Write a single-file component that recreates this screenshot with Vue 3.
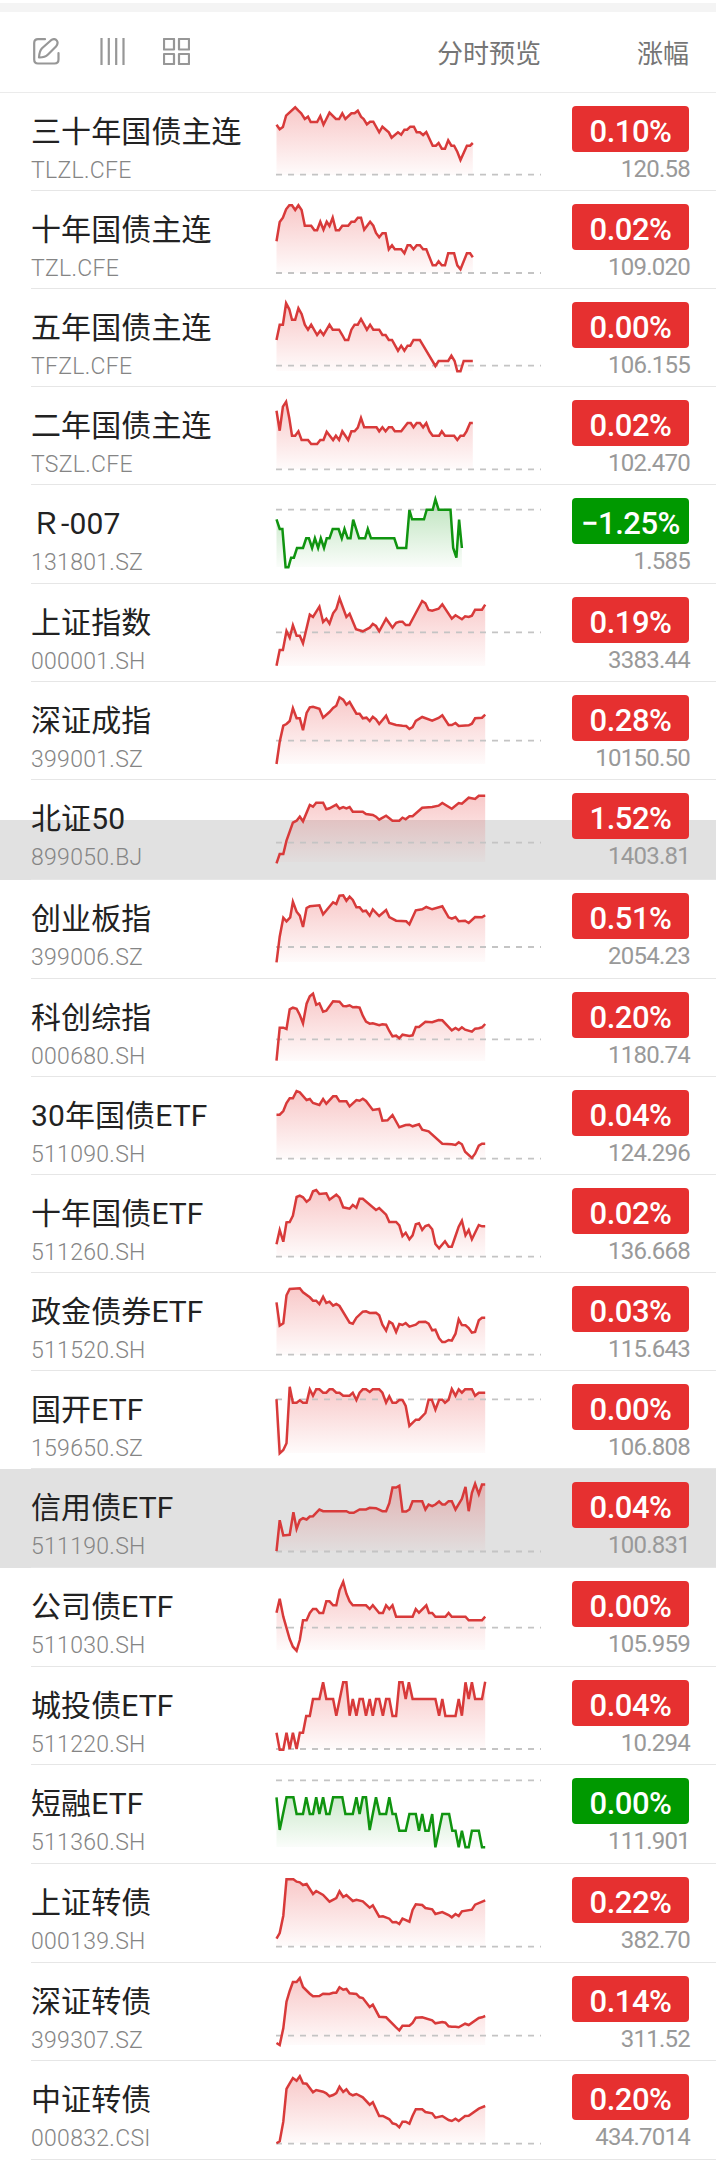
<template>
	<div class="quotes">
		<div class="strip"></div>
		<header class="toolbar">
			<div class="tools">
				<svg width="27" height="27" viewBox="0 0 27 27">
					<path d="M12 1.200H5Q1.200 1.200 1.200 5V21.500Q1.200 25.500 5 25.500H21.500Q25.500 25.500 25.500 21.500V15" />
					<path d="M6 19.500C6.200 16 6.600 12.800 9 10.300L17.500 2.700C20 .7 22.500 1 23.800 2.600C25 4.200 24.600 6.500 23 8.500L15 16.500C12.500 19 9.500 19.600 6 19.500Z" />
				</svg>
				<svg class="bars" width="25" height="27" viewBox="0 0 25 27">
					<path d="M1.500 0V27M8.800 0V27M16.200 0V27M23.500 0V27" />
				</svg>
				<svg width="27" height="27" viewBox="0 0 27 27">
					<path d="M1 1H11V11.500H1ZM16 1H26V11.500H16ZM1 16H11V26H1ZM16 16H26V26H16Z" />
				</svg>
			</div>
			<span class="col-preview">分时预览</span>
			<span class="col-change">涨幅</span>
		</header>

		<!-- Lista de cotizaciones -->
		<div v-for="q in quotes" :key="q.code" class="row" :class="[q.tone, q.mark]" :style="{ height: q.h + 'px' }">
			<div class="cell">
				<div class="ident">
					<div class="name">{{ q.name }}</div>
					<div class="code">{{ q.code }}</div>
				</div>
				<svg class="trend" width="265" height="97">
					<path class="area" :d="q.area" :fill="q.tone === 'down' ? 'url(#fall)' : 'url(#rise)'" />
					<path class="base" :d="'M0 ' + q.base + 'H265'" />
					<path class="line" :d="q.line" />
				</svg>
				<div class="figures">
					<div class="badge">{{ q.pct }}</div>
					<div class="price">{{ q.price }}</div>
				</div>
			</div>
		</div>

		<svg class="defs" width="0" height="0">
			<defs>
				<linearGradient id="rise" gradientUnits="userSpaceOnUse" x1="0" y1="14" x2="0" y2="82">
					<stop offset="0" stop-color="#e63232" stop-opacity=".27" />
					<stop offset="1" stop-color="#e63232" stop-opacity=".02" />
				</linearGradient>
				<linearGradient id="fall" gradientUnits="userSpaceOnUse" x1="0" y1="14" x2="0" y2="82">
					<stop offset="0" stop-color="#089808" stop-opacity=".27" />
					<stop offset="1" stop-color="#089808" stop-opacity=".02" />
				</linearGradient>
			</defs>
		</svg>
	</div>
</template>

<script setup>
	// name, code, pct, price, height, y shift, base, points
	const rows = [
		['三十年国债主连', 'TLZL.CFE', '0.10%', '120.58', 98, -93, 524, '604,374 611,388 618,381 625,347 645,322 652,332 658,340 666,357 673,350 679,366 693,366 700,348 707,374 720,338 734,357 741,357 748,340 755,357 768,340 775,340 782,332 789,350 795,357 802,373 809,365 816,365 829,397 836,380 850,397 856,413 870,397 877,404 884,389 890,389 897,380 905,380 911,397 918,397 925,405 932,396 946,437 953,437 959,429 966,446 973,446 980,421 987,437 993,437 1000,455 1007,480 1021,437 1028,437 1034,429'],
		['十年国债主连', 'TZL.CFE', '0.02%', '109.020', 98, -1, 249, '604,154 611,96 618,83 625,58 632,46 638,46 645,60 652,46 659,60 666,107 680,107 687,121 693,121 700,95 707,119 714,95 720,108 727,83 734,121 741,121 748,107 761,107 768,95 775,95 782,83 789,83 796,119 809,95 816,107 822,129 829,142 836,130 843,130 850,178 857,166 863,178 877,178 884,190 891,166 897,166 904,178 911,166 918,166 925,178 932,178 946,226 953,226 959,214 966,226 973,226 980,190 993,190 1000,226 1007,238 1021,190 1028,190 1034,202'],
		['五年国债主连', 'TFZL.CFE', '0.00%', '106.155', 98, -99, 527, '604,450 611,404 618,404 625,340 632,358 638,389 645,389 652,355 659,372 666,404 673,419 680,404 693,435 700,422 707,435 720,404 727,419 741,419 748,435 754,450 761,450 768,419 775,404 782,404 789,387 802,419 809,404 816,419 829,419 836,435 843,435 850,450 857,450 870,482 877,467 884,482 891,467 897,467 904,450 918,450 925,466 952,528 959,513 980,513 987,497 994,513 1000,544 1007,544 1014,513 1034,513'],
		['二年国债主连', 'TSZL.CFE', '0.02%', '102.470', 98, 3, 238, '604,62 611,122 618,50 625,35 632,85 638,137 645,137 652,124 659,150 673,150 680,162 693,162 700,150 707,150 714,125 728,150 734,137 741,150 748,124 761,150 768,124 775,124 782,113 789,84 796,112 823,112 829,124 836,112 843,124 850,112 857,112 863,124 877,124 891,99 898,99 904,112 911,99 918,99 925,112 932,99 939,124 946,137 960,137 966,124 973,137 993,137 1000,150 1007,137 1014,137 1020,124 1028,99 1034,99'],
		['Ｒ-007', '131801.SZ', '−1.25%', '1.585', 99, -95, 359, '604,388 611,417 617,417 624,532 630,532 636,503 642,503 649,474 662,474 669,445 675,445 682,474 688,445 695,474 701,445 708,474 714,445 720,445 727,417 740,417 747,445 753,417 760,445 766,445 772,389 785,445 798,445 804,417 811,445 862,445 869,474 888,474 895,360 901,388 927,388 933,359 946,359 952,328 959,359 985,359 991,474 998,503 1004,389 1010,474', 'down'],
		['上证指数', '000001.SH', '0.19%', '3383.44', 98, 1, 142, '604,242 611,195 618,195 626,138 633,158 640,121 648,152 655,152 662,175 677,89 684,96 698,65 706,111 713,101 720,116 728,85 735,72 742,40 757,96 764,86 778,133 793,139 808,128 815,117 822,123 829,139 844,101 858,128 866,113 873,110 880,110 887,120 895,120 923,48 930,55 937,75 945,77 959,71 967,58 988,101 996,91 1010,103 1017,94 1025,96 1032,92 1039,74 1054,74 1061,59'],
		['深证成指', '399001.SZ', '0.28%', '10150.50', 98, -97, 467, '604,537 611,470 619,422 626,417 633,408 640,370 648,400 655,400 662,436 670,384 677,367 684,365 698,371 706,398 720,381 728,369 735,362 742,337 750,344 757,359 764,351 779,386 786,386 793,400 801,398 808,408 815,395 822,403 829,417 844,392 851,414 866,420 880,422 888,423 895,432 902,426 909,408 923,396 945,407 959,399 967,391 981,420 988,420 996,414 1003,423 1025,421 1032,416 1039,400 1054,398 1061,389'],
		['北证50', '899050.BJ', '1.52%', '1403.81', 100, 0, 188, '604,250 611,222 619,222 626,182 640,128 648,122 655,110 662,124 677,75 684,80 691,68 706,68 713,88 720,85 735,74 742,86 750,81 757,85 764,81 771,95 793,95 800,102 815,105 822,110 829,119 844,107 858,122 873,122 880,113 887,118 895,109 902,109 923,83 945,81 959,77 967,69 988,86 1003,69 1010,71 1025,53 1039,57 1047,47 1061,47', 'up', 'half'],
		['创业板指', '399006.SZ', '0.51%', '2054.23', 99, -100, 501, '604,547 611,470 619,413 626,424 634,412 640,365 648,395 655,407 662,441 670,384 677,379 698,376 706,403 728,367 735,372 742,347 750,346 757,362 764,350 771,360 779,382 786,382 793,394 800,392 808,407 815,388 829,408 844,390 851,411 866,422 888,424 895,433 909,391 923,388 932,381 945,388 967,379 981,412 988,416 996,411 1003,424 1017,422 1025,429 1039,411 1054,412 1061,406'],
		['科创综指', '000680.SH', '0.20%', '1180.74', 98, -4, 193, '604,257 611,158 619,158 626,162 633,103 640,98 648,101 655,120 662,145 670,86 677,64 684,56 691,89 698,85 706,110 713,107 728,79 742,80 750,93 757,94 764,91 771,97 779,96 786,98 793,122 800,140 808,146 815,145 829,151 836,148 844,149 851,168 858,184 866,182 873,190 880,179 895,183 902,181 909,156 916,156 930,140 945,142 959,135 967,136 988,166 996,159 1003,165 1010,157 1017,164 1032,170 1039,161 1047,160 1054,157 1061,147'],
		['30年国债ETF', '511090.SH', '0.04%', '124.296', 98, -102, 551, '604,419 611,419 619,408 626,384 633,370 640,370 648,348 655,352 670,375 677,372 684,384 698,390 706,372 713,386 728,364 735,364 742,379 757,379 764,394 779,375 786,377 793,371 800,378 815,405 829,402 836,437 847,436 858,420 873,457 887,450 895,449 902,454 916,448 923,464 937,469 967,506 988,508 996,510 1003,502 1010,508 1017,530 1032,549 1039,536 1047,512 1054,506 1061,506'],
		['十年国债ETF', '511260.SH', '0.02%', '136.668', 98, -5, 260, '604,223 611,180 619,215 626,157 633,156 640,137 648,81 655,77 662,82 670,95 677,88 684,64 691,60 698,72 713,70 720,89 735,74 742,83 750,112 764,116 771,105 779,113 786,86 793,86 822,120 829,114 844,134 851,156 866,156 873,166 880,198 887,188 895,208 902,196 909,163 916,160 923,180 930,168 937,165 945,178 952,222 960,235 973,214 981,230 988,230 996,198 1003,170 1010,152 1018,196 1025,180 1032,208 1047,165 1054,169 1061,169'],
		['政金债券ETF', '511520.SH', '0.03%', '115.643', 98, -103, 554, '604,397 611,467 619,460 626,376 633,357 655,355 662,367 677,382 684,392 691,392 698,402 706,380 713,399 720,395 728,407 735,402 742,408 764,458 771,461 779,443 793,425 800,424 808,429 822,428 829,436 836,464 844,482 851,455 858,461 866,486 873,462 880,465 887,459 895,470 909,464 916,456 930,455 937,461 945,481 952,479 960,505 967,516 973,516 981,510 988,512 996,491 1003,448 1010,465 1018,466 1025,474 1032,488 1039,486 1047,451 1054,443 1061,443'],
		['国开ETF', '159650.SZ', '0.00%', '106.808', 98, -1, 88, '604,88 611,250 619,240 626,220 633,50 640,98 648,98 655,91 662,98 670,98 677,58 684,77 691,58 698,58 706,68 713,68 720,58 727,58 735,68 742,68 750,77 764,77 771,68 779,90 786,68 793,58 800,58 808,66 815,58 829,58 836,68 844,98 851,79 858,98 866,98 873,90 880,90 887,108 895,168 909,149 916,149 930,129 937,89 944,89 952,119 960,89 967,89 973,98 981,89 988,57 996,77 1003,58 1010,68 1017,58 1032,58 1039,77 1047,68 1061,68'],
		['信用债ETF', '511190.SH', '0.04%', '100.831', 99, -99.5, 546, '604,545 611,452 619,498 633,496 641,428 648,478 655,452 662,446 670,450 677,441 684,440 698,420 706,425 757,425 764,430 773,430 786,420 800,420 808,415 822,416 836,425 844,425 851,401 858,354 866,354 873,349 880,426 888,426 895,420 902,395 923,395 930,420 937,405 945,410 952,405 960,396 967,405 973,405 981,395 988,395 996,420 1010,388 1018,352 1025,425 1032,370 1039,343 1047,374 1054,345 1061,345', 'up', 'full'],
		['公司债ETF', '511030.SH', '0.00%', '105.959', 99, -3, 188, '604,143 611,101 619,155 633,222 640,245 648,257 655,225 662,166 670,166 677,144 684,132 691,132 698,144 706,144 713,109 720,109 728,121 735,121 742,76 750,50 757,86 764,109 771,121 800,121 808,132 815,121 829,144 837,144 844,121 851,132 858,121 866,155 902,155 909,132 916,143 932,121 938,144 945,144 952,155 974,155 981,144 988,155 1018,155 1025,166 1054,166 1061,155'],
		['城投债ETF', '511220.SH', '0.04%', '10.294', 98, -102, 552, '604,503 611,554 619,554 626,503 633,552 640,503 648,552 655,503 662,503 669,453 677,453 684,402 698,402 706,352 713,402 728,402 735,452 750,352 757,352 764,452 771,402 779,452 786,402 793,402 800,452 808,402 815,452 822,402 829,402 837,452 844,402 851,402 858,453 866,453 873,352 880,352 887,402 894,352 902,402 952,402 960,452 967,402 974,453 996,453 1003,402 1010,452 1018,352 1025,402 1032,352 1039,402 1054,402 1061,350'],
		['短融ETF', '511360.SH', '0.00%', '111.901', 99, 0, 46, '604,97 611,195 626,97 641,97 648,147 662,147 669,97 677,147 684,147 691,97 698,147 706,97 713,147 720,147 728,97 748,97 755,147 771,147 779,97 786,147 793,97 800,97 808,195 822,97 830,147 844,147 851,97 858,147 865,147 873,197 887,197 895,147 909,147 916,197 923,147 930,197 937,197 945,147 952,247 967,147 982,147 989,197 996,197 1003,247 1010,197 1018,247 1025,247 1032,197 1047,197 1054,247 1061,247', 'down'],
		['上证转债', '000139.SH', '0.22%', '382.70', 99, -99, 545, '604,521 611,504 619,452 626,343 641,343 648,350 655,352 662,360 670,357 684,387 691,378 706,390 720,410 735,399 742,379 750,396 757,390 771,408 779,404 793,409 808,428 815,421 829,455 837,454 851,461 858,472 866,471 873,477 880,461 895,470 902,435 909,418 923,420 930,429 945,433 952,447 967,441 981,450 988,457 996,447 1003,453 1010,439 1032,434 1039,419 1061,406'],
		['深证转债', '399307.SZ', '0.14%', '311.52', 98, 2, 212, '604,234 611,240 619,190 626,110 633,78 640,51 648,51 655,39 662,66 677,86 684,94 698,93 706,86 720,87 728,83 735,83 742,67 750,74 757,72 764,85 779,87 786,97 793,99 808,126 815,119 829,155 844,157 866,187 873,196 880,182 895,182 902,174 909,158 923,157 945,166 952,175 967,171 974,173 981,184 988,185 996,185 1003,187 1017,176 1025,180 1047,159 1054,157 1061,153'],
		['中证转债', '000832.CSI', '0.20%', '434.7014', 99, -96, 536, '604,535 611,529 619,470 626,372 633,355 640,339 648,347 655,334 662,355 670,356 684,382 691,375 706,380 713,385 720,394 728,390 735,384 742,365 750,381 757,373 764,386 771,391 779,387 793,397 808,419 815,412 829,453 837,453 851,463 858,475 866,478 873,487 880,470 887,470 895,476 902,452 909,433 923,433 930,441 945,445 952,458 967,453 981,465 988,468 996,461 1003,468 1017,453 1025,452 1047,431 1061,423'],
	]

	const quotes = rows.map(([name, code, pct, price, h, shift, base, points, tone = 'up', mark = '']) => {
		const toY = (y) => +(y / 3 + shift).toFixed(1)
		const pts = points.split(' ').map((p) => {
			const [x, y] = p.split(',').map(Number)
			return [+((x - 604) / 2.19 + 0.5).toFixed(1), toY(y)]
		})
		const line = 'M' + pts.map((p) => p.join(' ')).join('L')
		const last = pts[pts.length - 1][0]
		const area = line + 'L' + last + ' 82L0.5 82Z'
		return { name, code, pct, price, h, base: toY(base), line, area, tone, mark }
	})
</script>

<style>
	body {
		margin: 0;
		background: #fff;
	}
</style>

<style scoped>
	.quotes {
		width: 716px;
		height: 2165px;
		overflow: hidden;
		background: #fff;
		font-family: Roboto, "Noto Sans CJK SC", sans-serif;
	}

	.strip {
		height: 9px;
		margin-top: 3px;
		background: #f4f4f4;
	}
	.quotes::before {
		content: '';
		display: table;
	}

	.toolbar {
		display: flex;
		align-items: center;
		box-sizing: border-box;
		height: 81px;
		padding: 0 27px 1px 33px;
		border-bottom: 1px solid #ebebeb;
		color: #757575;
		font-size: 26px;
	}
	.tools {
		display: flex;
		flex: 1;
		gap: 38px;
	}
	.tools svg {
		fill: none;
		stroke: #979797;
		stroke-width: 2.2;
		stroke-linejoin: round;
		stroke-linecap: round;
	}
	.tools .bars {
		margin-left: 2px;
		stroke-linecap: butt;
	}
	.col-change {
		width: 148px;
		text-align: right;
	}
	.col-preview,
	.col-change {
		padding-bottom: 1px;
	}

	.row {
		box-sizing: border-box;
		padding-left: 31px;
	}
	.cell {
		display: flex;
		box-sizing: border-box;
		height: 100%;
		padding-right: 27px;
		border-bottom: 1px solid #e6e6e6;
	}
	.half {
		background: linear-gradient(transparent 40px, #e1e1e1 40px);
	}
	.full {
		background: #e1e1e1;
	}

	.ident {
		width: 245px;
		flex: none;
		padding-top: 16px;
	}
	.name {
		height: 44px;
		line-height: 45px;
		font-size: 30px;
		letter-spacing: 0.1px;
		color: #222;
		white-space: nowrap;
	}
	.code {
		margin-top: 4px;
		line-height: 27px;
		font-size: 23px;
		font-weight: 300;
		letter-spacing: 0.3px;
		color: #858585;
	}

	.trend {
		flex: none;
		overflow: visible;
	}
	.line {
		fill: none;
		stroke: #d83a3a;
		stroke-width: 2.5;
	}
	.down .line {
		stroke: #109410;
	}
	.base {
		fill: none;
		stroke: #c4c4c4;
		stroke-width: 1.8;
		stroke-dasharray: 6 6;
	}

	.figures {
		flex: 1;
		display: flex;
		flex-direction: column;
		align-items: flex-end;
		padding-top: 13px;
	}
	.badge {
		width: 117px;
		height: 46px;
		line-height: 51px;
		border-radius: 4px;
		background: #e63030;
		color: #fff;
		font-size: 31px;
		font-weight: 500;
		letter-spacing: -0.5px;
		text-align: center;
	}
	.down .badge {
		background: #009900;
	}
	.price {
		margin-top: 4px;
		margin-right: -1px;
		line-height: 26px;
		font-size: 24px;
		letter-spacing: -0.75px;
		color: #999;
	}
	.defs {
		display: block;
	}
</style>
